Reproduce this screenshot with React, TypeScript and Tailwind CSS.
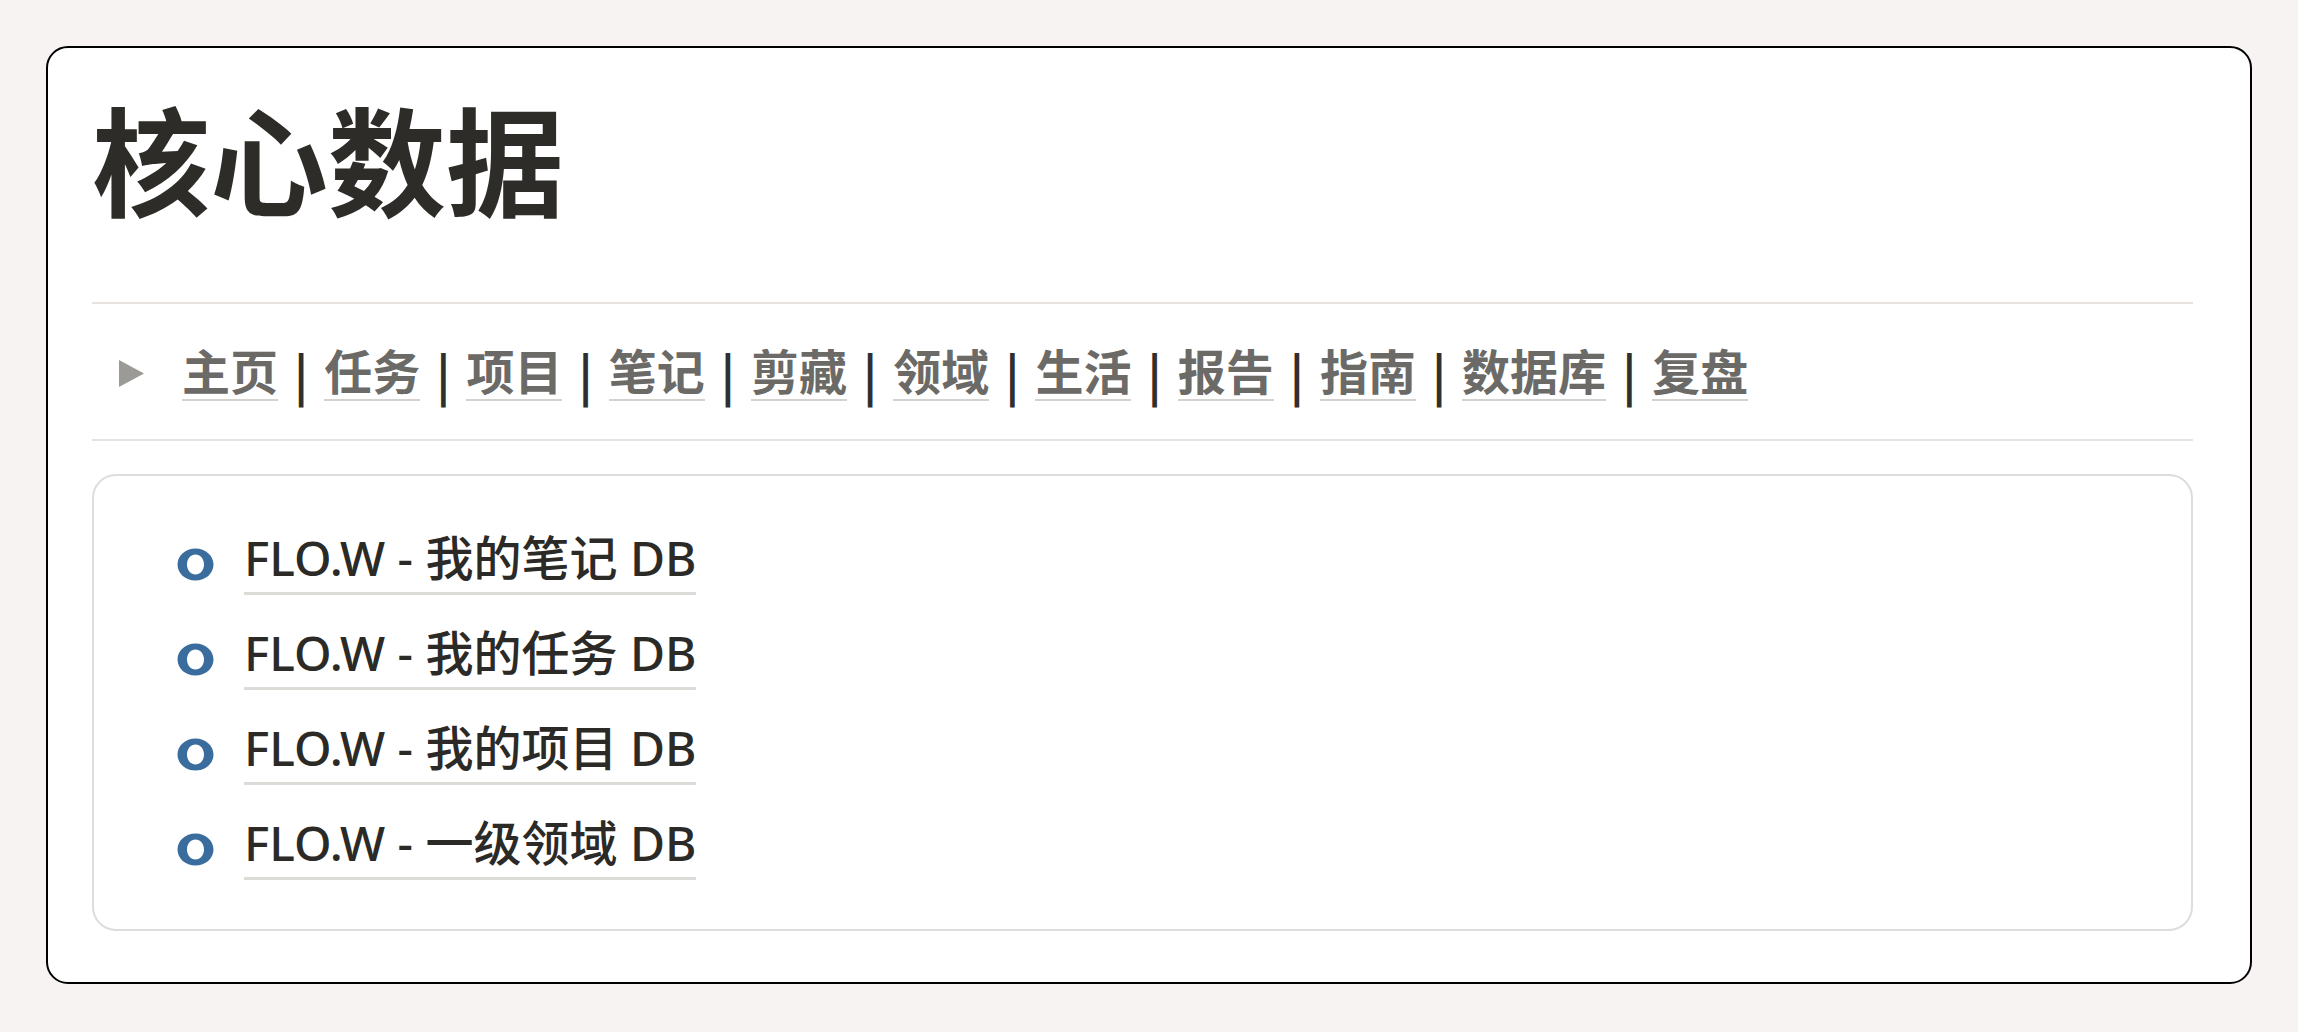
// Core data page: title, nav links and a database list

const NAV_ITEMS = ['主页', '任务', '项目', '笔记', '剪藏', '领域', '生活', '报告', '指南', '数据库', '复盘']

const DB_ITEMS = ['FLO.W - 我的笔记 DB', 'FLO.W - 我的任务 DB', 'FLO.W - 我的项目 DB', 'FLO.W - 一级领域 DB']

const FONT = { fontFamily: '"Noto Sans", "Noto Sans CJK SC", sans-serif' }
const CJK = { fontFamily: '"Noto Sans CJK SC", sans-serif' }

function RingBullet() {
  return (
    <svg width="37" height="33" viewBox="0 0 37 33" className="shrink-0">
      <path
        fillRule="evenodd"
        fill="#3a6d9d"
        d="M18.5 0.5C28.5 0.5 36.5 7.5 36.5 16.5C36.5 25.5 28.5 32.5 18.5 32.5C8.5 32.5 0.5 25.5 0.5 16.5C0.5 7.5 8.5 0.5 18.5 0.5ZM18.5 6.5C14 6.5 10 10.5 10 16.5C10 22.5 14 26.5 18.5 26.5C23 26.5 27 22.5 27 16.5C27 10.5 23 6.5 18.5 6.5Z"
      />
    </svg>
  )
}

export default function App() {
  return (
    <div className="min-h-screen bg-[#f7f3f2] px-[46px] pt-[46px]" style={FONT}>
      <div className="border-2 border-black rounded-[22px] bg-white pl-[44px] pr-[57px] pt-[50px] pb-[51px]">
        {/* Title */}
        <h1 className="text-[118px] leading-none font-bold text-[#2d2c28]" style={CJK}>核心数据</h1>

        <div className="mt-[86px] border-t-2 border-[#e6e3e0]" />

        {/* Nav */}
        <div className="flex items-center pt-[41px] pb-[38px] pl-[27px]">
          <svg width="25" height="27" viewBox="0 0 25 27" className="shrink-0 mr-[38px]">
            <path d="M0 0L25 13.5L0 27Z" fill="#9b9a97" />
          </svg>
          <div className="flex items-center text-[48px] leading-none font-bold" style={CJK}>
            {NAV_ITEMS.map((item, i) => (
              <div key={item} className="flex items-center">
                {i > 0 && <span className="mx-[16px] text-[#2f2f2f] font-bold">|</span>}
                <span className="text-[#6b6a67] border-b-2 border-[#d3d2cf] pb-[6px]">{item}</span>
              </div>
            ))}
          </div>
        </div>

        <div className="border-t-2 border-[#e6e3e0]" />

        {/* Database list */}
        <div className="mt-[33px] border-2 border-[#dedddb] rounded-[24px] pl-[83px] pt-[58px] pb-[49px]">
          <div className="flex flex-col gap-[34px]">
            {DB_ITEMS.map((item) => (
              <div key={item} className="flex items-center">
                <RingBullet />
                <span className="ml-[30px] text-[48px] leading-none font-medium text-[#2b2a27] border-b-[3px] border-[#dcdbd8] pb-[10px]">
                  {item}
                </span>
              </div>
            ))}
          </div>
        </div>
      </div>
    </div>
  )
}
